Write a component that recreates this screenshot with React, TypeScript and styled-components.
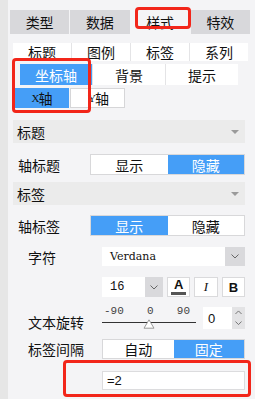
import React from "react";
import styled, { createGlobalStyle } from "styled-components";

const BLUE = "#459ef7";
const RED = "#f2261a";
const CJK = `"Noto Sans CJK SC", "Noto Sans", sans-serif`;

const GlobalStyle = createGlobalStyle`
  html, body {
    margin: 0;
    padding: 0;
    background: #f4f4f6;
    font-family: ${CJK};
    color: #111;
  }
`;

const Page = styled.div`
  display: flex;
  width: 255px;
  height: 399px;
  position: relative;
  overflow: hidden;
`;

const SideStrip = styled.div`
  width: 8px;
  flex: none;
  background: #e6e6e6;
`;

const Panel = styled.div`
  flex: 1;
  display: flex;
  flex-direction: column;
  padding: 10px 0 0 2px;
`;

const TabBar = styled.div`
  display: flex;
  gap: 1px;
  width: 240px;
  height: 24px;
`;

const Tab = styled.div<{ $active?: boolean }>`
  position: relative;
  flex: 1;
  display: flex;
  align-items: center;
  justify-content: center;
  font-size: 14px;
  background: ${(p) => (p.$active ? "#f4f4f6" : "#d8d8db")};
`;

const Mark = styled.div<{ $top: number; $left: number; $w: number; $h: number }>`
  position: absolute;
  top: ${(p) => p.$top}px;
  left: ${(p) => p.$left}px;
  width: ${(p) => p.$w}px;
  height: ${(p) => p.$h}px;
  border: 3px solid ${RED};
  border-radius: 4px;
  box-sizing: border-box;
  pointer-events: none;
`;

const SubTabs = styled.div<{ $indent: number; $top: number; $h: number }>`
  display: flex;
  margin: ${(p) => p.$top}px 0 0 ${(p) => p.$indent}px;
  height: ${(p) => p.$h}px;
  background: #fff;
  align-self: flex-start;
`;

const SubTab = styled.div<{ $w: number; $active?: boolean }>`
  width: ${(p) => p.$w}px;
  display: flex;
  align-items: center;
  justify-content: center;
  font-size: 14px;
  border-left: 1px solid #e4e4e6;
  background: ${(p) => (p.$active ? BLUE : "#fff")};
  color: ${(p) => (p.$active ? "#fff" : "#111")};
  &:first-child {
    border-left: none;
  }
`;

const AxisTabs = styled.div`
  display: flex;
  margin: 3px 0 0 5px;
  height: 20px;
`;

const AxisTab = styled.div<{ $active?: boolean }>`
  width: ${(p) => (p.$active ? 54 : 55)}px;
  display: flex;
  align-items: center;
  justify-content: center;
  font-size: 14px;
  box-sizing: border-box;
  background: ${(p) => (p.$active ? BLUE : "#fff")};
  border: ${(p) => (p.$active ? "none" : "1px solid #d6d6d8")};
  margin-left: ${(p) => (p.$active ? 0 : 1)}px;
  padding-left: ${(p) => (p.$active ? 0 : 2)}px;
  & b {
    font-family: "Liberation Serif", serif;
    font-weight: normal;
    font-size: 11px;
    letter-spacing: -1px;
  }
`;

const SectionHeader = styled.div<{ $top: number }>`
  margin: ${(p) => p.$top}px 0 0 3px;
  width: 232px;
  height: 23px;
  background: #ebebeb;
  display: flex;
  align-items: center;
  justify-content: space-between;
  padding: 0 6px 0 4px;
  box-sizing: border-box;
  font-size: 14px;
`;

const Caret = styled.span`
  width: 0;
  height: 0;
  border-left: 4px solid transparent;
  border-right: 4px solid transparent;
  border-top: 4px solid #9a9a9a;
`;

const Row = styled.div<{ $top: number; $labelW: number; $indent: number; $h: number }>`
  display: flex;
  align-items: center;
  margin: ${(p) => p.$top}px 0 0 ${(p) => p.$indent}px;
  height: ${(p) => p.$h}px;
  width: ${(p) => 235 - p.$indent}px;
  & > label {
    width: ${(p) => p.$labelW}px;
    flex: none;
    font-size: 14px;
  }
`;

const Toggle = styled.div`
  flex: 1;
  display: flex;
  height: 100%;
  border: 1px solid #d8d8da;
  box-sizing: border-box;
  background: #fff;
`;

const ToggleOption = styled.div<{ $on?: boolean }>`
  flex: 1;
  display: flex;
  align-items: center;
  justify-content: center;
  font-size: 14px;
  background: ${(p) => (p.$on ? BLUE : "#fff")};
  color: ${(p) => (p.$on ? "#fff" : "#111")};
`;

const Select = styled.div<{ $w?: number }>`
  ${(p) => (p.$w ? `width: ${p.$w}px; flex: none;` : "flex: 1;")}
  display: flex;
  height: 100%;
  background: #fff;
  font-family: "DejaVu Serif", "Liberation Serif", serif;
  font-size: 11px;
  & > span {
    flex: 1;
    display: flex;
    align-items: center;
    padding-left: 8px;
  }
`;

const SizeValue = styled.span`
  font-family: "Liberation Mono", monospace;
  font-size: 12px;
`;

const SelectArrow = styled.div<{ $w: number }>`
  width: ${(p) => p.$w}px;
  background: #d9d9dc;
  display: flex;
  align-items: center;
  justify-content: center;
`;

const IconBtn = styled.div<{ $italic?: boolean }>`
  width: 24px;
  height: 20px;
  margin-left: 4px;
  box-sizing: border-box;
  border: 1px solid #dadadc;
  background: #fff;
  display: flex;
  align-items: center;
  justify-content: center;
  font-family: ${(p) => (p.$italic ? `"Liberation Serif", serif` : `"Liberation Sans", sans-serif`)};
  font-style: ${(p) => (p.$italic ? "italic" : "normal")};
  font-size: 13px;
  font-weight: ${(p) => (p.$italic ? "normal" : "bold")};
  &:first-of-type {
    margin-left: 7px;
  }
`;

const ColorA = styled.div`
  display: flex;
  flex-direction: column;
  align-items: center;
  line-height: 12px;
  & i {
    display: block;
    width: 15px;
    height: 3px;
    background: #555;
    margin-top: 1px;
  }
`;

const SliderWrap = styled.div`
  width: 94px;
  height: 100%;
  flex: none;
  display: flex;
  flex-direction: column;
  position: relative;
`;

const SliderTicks = styled.div`
  display: flex;
  justify-content: space-between;
  padding: 0 0 0 2px;
  width: 86px;
  font-family: "Liberation Mono", monospace;
  font-size: 11px;
  color: #444;
  height: 13px;
  line-height: 13px;
  margin-top: 1px;
`;

const SliderLine = styled.div`
  margin-top: 4px;
  height: 1px;
  background: #333;
  width: 94px;
`;

const Thumb = styled.svg`
  position: absolute;
  left: 41px;
  top: 15px;
`;

const RotLabel = styled.label`
  margin-top: 10px;
`;

const NumInput = styled.div`
  margin-left: 7px;
  margin-top: 2px;
  display: flex;
  width: 43px;
  height: 22px;
  background: #fff;
  font-family: "Liberation Sans", sans-serif;
  font-size: 13px;
  & > span {
    flex: 1;
    display: flex;
    align-items: center;
    padding-left: 5px;
  }
`;

const Spinner = styled.div`
  width: 13px;
  background: #e3e3e5;
  display: flex;
  flex-direction: column;
  align-items: center;
  justify-content: space-around;
`;

const TextInput = styled.div`
  flex: 1;
  height: 100%;
  background: #fff;
  border: 1px solid #dcdcde;
  box-sizing: border-box;
  display: flex;
  align-items: center;
  padding-left: 4px;
  font-family: "Liberation Sans", sans-serif;
  font-size: 13px;
`;

function Chevron({ up, size = 8 }: { up?: boolean; size?: number }) {
  return (
    <svg width={size} height={size / 2 + 1} viewBox="0 0 8 5">
      <path
        d={up ? "M0.5 4.5 L4 1 L7.5 4.5" : "M0.5 0.5 L4 4 L7.5 0.5"}
        fill="none"
        stroke="#666"
        strokeWidth="1"
      />
    </svg>
  );
}

export default function App() {
  return (
    <Page>
      <GlobalStyle />
      <SideStrip />
      <Panel>
        <TabBar>
          <Tab>类型</Tab>
          <Tab>数据</Tab>
          <Tab $active>
            样式
            <Mark $top={-3} $left={4} $w={56} $h={22} />
          </Tab>
          <Tab>特效</Tab>
        </TabBar>

        <SubTabs $indent={3} $top={9} $h={18}>
          <SubTab $w={58}>标题</SubTab>
          <SubTab $w={58}>图例</SubTab>
          <SubTab $w={58}>标签</SubTab>
          <SubTab $w={58}>系列</SubTab>
        </SubTabs>
        <SubTabs $indent={10} $top={3} $h={21}>
          <SubTab $w={72} $active>坐标轴</SubTab>
          <SubTab $w={72}>背景</SubTab>
          <SubTab $w={72}>提示</SubTab>
        </SubTabs>
        <AxisTabs>
          <AxisTab $active>
            <b>X</b>轴
          </AxisTab>
          <AxisTab>
            <b>Y</b>轴
          </AxisTab>
        </AxisTabs>

        <SectionHeader $top={12}>
          标题
          <Caret />
        </SectionHeader>
        <Row $top={11} $indent={8} $labelW={72} $h={21}>
          <label>轴标题</label>
          <Toggle>
            <ToggleOption>显示</ToggleOption>
            <ToggleOption $on>隐藏</ToggleOption>
          </Toggle>
        </Row>

        <SectionHeader $top={7}>
          标签
          <Caret />
        </SectionHeader>
        <Row $top={10} $indent={8} $labelW={72} $h={21}>
          <label>轴标签</label>
          <Toggle>
            <ToggleOption $on>显示</ToggleOption>
            <ToggleOption>隐藏</ToggleOption>
          </Toggle>
        </Row>

        <Row $top={11} $indent={18} $labelW={74} $h={19}>
          <label>字符</label>
          <Select>
            <span>Verdana</span>
            <SelectArrow $w={20}>
              <Chevron />
            </SelectArrow>
          </Select>
        </Row>

        <Row $top={11} $indent={18} $labelW={74} $h={20}>
          <label />
          <Select $w={61}>
            <SizeValue>16</SizeValue>
            <SelectArrow $w={18}>
              <Chevron />
            </SelectArrow>
          </Select>
          <IconBtn>
            <ColorA>
              A<i />
            </ColorA>
          </IconBtn>
          <IconBtn $italic>I</IconBtn>
          <IconBtn>B</IconBtn>
        </Row>

        <Row $top={7} $indent={18} $labelW={74} $h={26}>
          <RotLabel>文本旋转</RotLabel>
          <SliderWrap>
            <SliderTicks>
              <span>-90</span>
              <span>0</span>
              <span>90</span>
            </SliderTicks>
            <SliderLine />
            <Thumb width="12" height="10" viewBox="0 0 12 10">
              <path d="M6 0.8 L11 9.2 L1 9.2 Z" fill="#fff" stroke="#999" strokeWidth="1" />
            </Thumb>
          </SliderWrap>
          <NumInput>
            <span>0</span>
            <Spinner>
              <Chevron up size={7} />
              <Chevron size={7} />
            </Spinner>
          </NumInput>
        </Row>

        <Row $top={9} $indent={18} $labelW={74} $h={20}>
          <label>标签间隔</label>
          <Toggle>
            <ToggleOption>自动</ToggleOption>
            <ToggleOption $on>固定</ToggleOption>
          </Toggle>
        </Row>

        <Row $top={12} $indent={18} $labelW={74} $h={19}>
          <label />
          <TextInput>=2</TextInput>
        </Row>
      </Panel>
      <Mark $top={58} $left={12} $w={79} $h={55} />
      <Mark $top={360} $left={63} $w={188} $h={37} />
    </Page>
  );
}
